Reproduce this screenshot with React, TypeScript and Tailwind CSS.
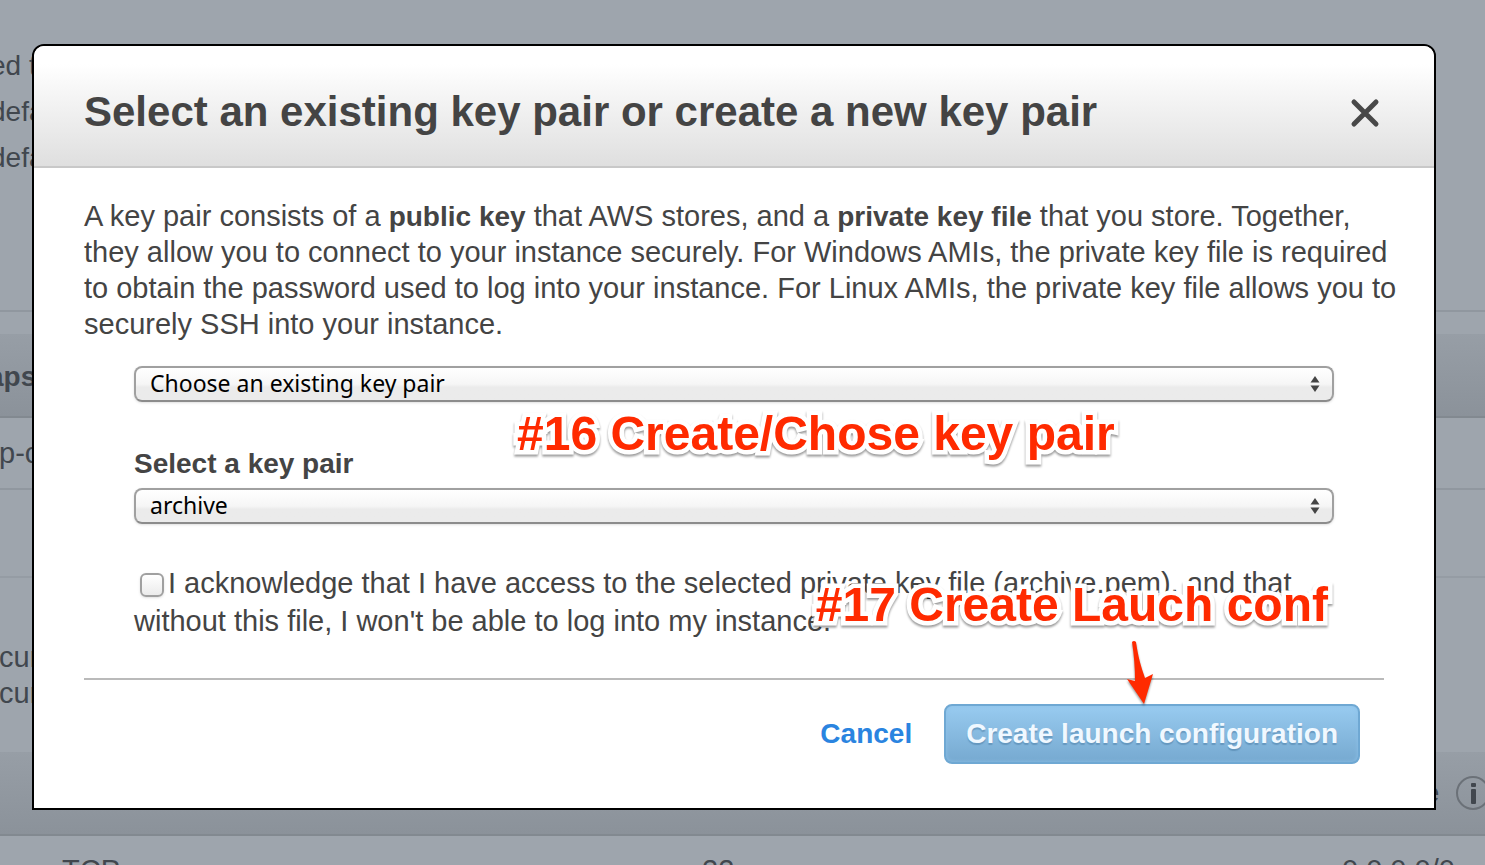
import { useState } from "react";

function SelectArrows() {
    return (
        <svg className="pointer-events-none absolute top-1/2 right-3 h-4 w-3 -translate-y-1/2" viewBox="0 0 12 16" fill="#444">
            <path d="M5 0 L9.5 6.5 H0.5 Z" />
            <path d="M0.5 9.5 H9.5 L5 16 Z" />
        </svg>
    );
}

function InfoIcon() {
    return (
        <svg className="h-9 w-9 shrink-0" viewBox="0 0 36 36" fill="none">
            <circle cx="18" cy="18" r="16" stroke="#6b7178" strokeWidth="2" />
            <rect x="16" y="8" width="5" height="4" rx="1" fill="#41474e" />
            <rect x="16" y="14" width="5" height="15" rx="1" fill="#41474e" />
        </svg>
    );
}

const selectStyle = "block h-9 w-full appearance-none rounded-lg border-2 border-[#a0a0a0] border-b-[#8c8c8c] bg-linear-to-b from-white from-0% via-[#f6f6f6] via-50% to-[#ebebeb] to-60% pr-10 pb-[2px] pl-[14px] font-['Noto_Sans','Open_Sans',sans-serif] text-[23px] leading-[30px] text-black shadow-sm"

const noteStyle = "absolute whitespace-nowrap text-[48px] leading-[56px] font-bold text-[#ff2a00] [-webkit-text-stroke:9px_white] [paint-order:stroke_fill] [stroke-linejoin:round] drop-shadow-[0_2px_1px_rgba(0,0,0,0.4)]"

export default function App() {
    const [source, setSource] = useState("existing")
    const [keyPair, setKeyPair] = useState("archive")
    const [acknowledged, setAcknowledged] = useState(false)

    return (
        <div className="relative h-screen overflow-hidden bg-[#9ea5ad] font-['Liberation_Sans',Arial,sans-serif] text-[29px] leading-9 text-[#41474e]">
            {/* page behind the dialog */}
            <div className="h-[312px] border-b-2 border-[#90979f] pt-12 text-[28px]">
                <div className="-ml-[10px] flex flex-col gap-[10px]">
                    <p>ed to</p>
                    <p>default</p>
                    <p>default</p>
                </div>
            </div>
            <div className="mt-[22px] flex h-[84px] items-center border-b-2 border-[#828990] bg-linear-to-b from-[#979ea6] to-[#8b929a] pt-1">
                <p className="-ml-3 text-[28px] font-bold">aps</p>
            </div>
            <div className="flex h-[72px] items-center border-b-2 border-[#90979f]">
                <p className="-ml-px">p-c</p>
            </div>
            <div className="h-[88px] border-b-2 border-[#959ca4]"></div>
            <div className="h-[174px] pt-[61px]">
                <p className="-ml-px">curity</p>
                <p className="-ml-px">curity</p>
            </div>
            <div className="flex h-[84px] items-center justify-end gap-4 border-b-2 border-[#828990] bg-linear-to-b from-[#979ea6] to-[#8b929a]">
                <p className="text-[28px] font-bold">Source</p>
                <div className="-mr-[6px]">
                    <InfoIcon />
                </div>
            </div>
            <div className="grid h-20 grid-cols-[640px_640px_1fr] pt-4 pl-[62px] whitespace-nowrap">
                <p>TCP</p>
                <p>22</p>
                <p>0.0.0.0/0</p>
            </div>

            <div role="dialog" aria-labelledby="title" className="absolute top-11 right-[49px] left-8 rounded-t-xl border-2 border-black bg-white text-[#444]">
                <div className="flex h-[122px] items-center justify-between rounded-t-[10px] border-b-2 border-[#c8c8c8] bg-linear-to-b from-white from-15% to-[#dfdfdf] px-[50px] pt-3">
                    <h1 id="title" className="text-[42px] leading-[48px] font-bold">Select an existing key pair or create a new key pair</h1>
                    <button aria-label="Close" className="cursor-pointer">
                        <svg className="h-10 w-10" viewBox="0 0 40 40" fill="none" stroke="#484848" strokeWidth="5" strokeLinecap="round">
                            <path d="M10 10 L32 32 M32 10 L10 32" />
                        </svg>
                    </button>
                </div>

                <div className="px-[50px] pt-[30px] pb-11">
                    <p className="whitespace-nowrap">
                        A key pair consists of a <b className="text-[28px] leading-none">public key</b> that AWS stores, and a <b className="text-[28px] leading-none">private key file</b> that you store. Together,<br />
                        they allow you to connect to your instance securely. For Windows AMIs, the private key file is required<br />
                        to obtain the password used to log into your instance. For Linux AMIs, the private key file allows you to<br />
                        securely SSH into your instance.
                    </p>

                    <form className="mt-6 px-[50px]">
                        <div className="relative">
                            <select aria-label="Key pair source" value={source} onChange={(e) => setSource(e.target.value)} className={selectStyle}>
                                <option value="existing">Choose an existing key pair</option>
                            </select>
                            <SelectArrows />
                        </div>

                        <label htmlFor="key_pair" className="mt-11 block text-[28px] font-bold">Select a key pair</label>
                        <div className="relative mt-[6px]">
                            <select id="key_pair" value={keyPair} onChange={(e) => setKeyPair(e.target.value)} className={selectStyle}>
                                <option value="archive">archive</option>
                            </select>
                            <SelectArrows />
                        </div>

                        <div className="mt-10 leading-[38px] whitespace-nowrap">
                            <input
                                id="acknowledge"
                                type="checkbox"
                                checked={acknowledged}
                                onChange={(e) => setAcknowledged(e.target.checked)}
                                className="mr-1 ml-[6px] h-6 w-6 appearance-none rounded-md border-2 border-[#a0a0a0] bg-linear-to-b from-white to-[#ebebeb] align-middle shadow-sm checked:bg-[#2a84e0]"
                            />
                            <label htmlFor="acknowledge">
                                I acknowledge that I have access to the selected private key file (archive.pem), and that<br />
                                without this file, I won't be able to log into my instance.
                            </label>
                        </div>
                    </form>

                    <div className="mt-[38px] flex items-center justify-end gap-8 border-t-2 border-[#bababa] pt-6 pr-6 text-[28px] font-bold">
                        <a href="#" className="text-[#2a84e0]">Cancel</a>
                        <button className="h-[60px] cursor-pointer rounded-lg border-2 border-[#6fa8d3] bg-linear-to-b from-[#98cbf0] to-[#76a9d0] px-5 whitespace-nowrap text-[#f0f8ff] shadow-[inset_0_0_4px_#8cc0e8] text-shadow-[0_2px_1px_rgba(60,110,150,0.4)]">
                            Create launch configuration
                        </button>
                    </div>
                </div>

                {/* numbered notes over the dialog */}
                <p className={noteStyle + " top-[360px] left-[483px]"}>#16 Create/Chose key pair</p>
                <p className={noteStyle + " top-[531px] right-[106px]"}>#17 Create Lauch conf</p>
                <svg className="absolute top-[592px] right-[274px] h-[70px] w-9 drop-shadow-[0_2px_1px_rgba(0,0,0,0.4)]" viewBox="0 0 36 70" fill="#ff2a00">
                    <path d="M8 4 Q10 2 12 4 C14 18 17 29 21 40 L29 36 L20 66 L3 41 L11 43 C11 30 10 17 8 4 Z" />
                </svg>
            </div>
        </div>
    );
}
